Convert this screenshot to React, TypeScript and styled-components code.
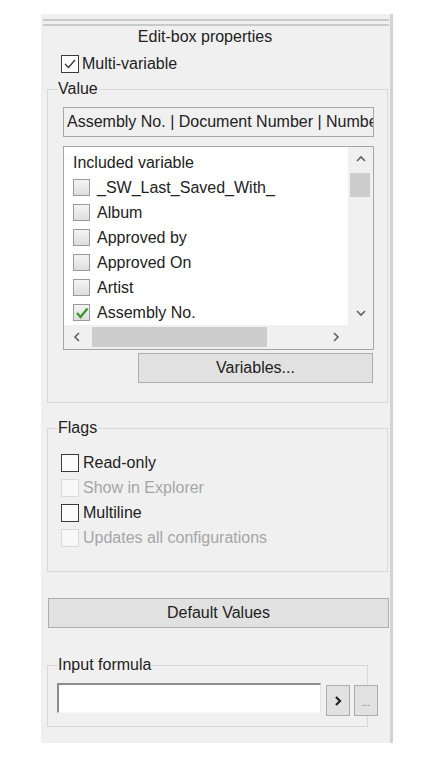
import React from "react";
import styled, { createGlobalStyle, css } from "styled-components";

type BoxKind = "dark" | "list" | "disabled";

interface Variable {
  name: string;
  checked: boolean;
}

const variables: Variable[] = [
  { name: "_SW_Last_Saved_With_", checked: false },
  { name: "Album", checked: false },
  { name: "Approved by", checked: false },
  { name: "Approved On", checked: false },
  { name: "Artist", checked: false },
  { name: "Assembly No.", checked: true },
];

const flags = [
  { label: "Read-only", disabled: false },
  { label: "Show in Explorer", disabled: true },
  { label: "Multiline", disabled: false },
  { label: "Updates all configurations", disabled: true },
];

const Chevron: React.FC<{ dir: "up" | "down" | "left" | "right"; bold?: boolean }> = ({
  dir,
  bold,
}) => {
  const pts = {
    up: "1,6 5,2 9,6",
    down: "1,2 5,6 9,2",
    left: "6,1 2,5 6,9",
    right: "2,1 6,5 2,9",
  }[dir];
  const horiz = dir === "up" || dir === "down";
  return (
    <svg
      width={horiz ? 10 : 8}
      height={horiz ? 8 : 10}
      viewBox={horiz ? "0 0 10 8" : "0 0 8 10"}
    >
      <polyline
        points={pts}
        fill="none"
        stroke={bold ? "#222" : "#606060"}
        strokeWidth={bold ? 2.2 : 1.6}
      />
    </svg>
  );
};

const CheckBox: React.FC<{ kind: BoxKind; checked?: boolean }> = ({ kind, checked }) => (
  <Box $kind={kind}>
    {checked && kind === "dark" && (
      <svg width="14" height="14" viewBox="0 0 14 14">
        <polyline points="2,7 5.5,10.5 12,3" fill="none" stroke="#333" strokeWidth="1.3" />
      </svg>
    )}
    {checked && kind === "list" && (
      <svg width="14" height="14" viewBox="0 0 14 14">
        <polyline points="2,7 5.5,11 12.5,2.5" fill="none" stroke="#2f9a26" strokeWidth="2.2" />
      </svg>
    )}
  </Box>
);

const App: React.FC = () => {
  return (
    <>
      <GlobalStyle />
      <Panel>
        <TopRule />
        <Title>Edit-box properties</Title>
        <MultiRow>
          <CheckBox kind="dark" checked />
          <span>Multi-variable</span>
        </MultiRow>

        <Group>
          <Legend>Value</Legend>
          <ValueBody>
            <ValueField>Assembly No. | Document Number | Number</ValueField>
            <List>
              <ListContent>
                <ListRow>Included variable</ListRow>
                {variables.map((v) => (
                  <ListRow key={v.name}>
                    <CheckBox kind="list" checked={v.checked} />
                    <ItemText>{v.name}</ItemText>
                  </ListRow>
                ))}
              </ListContent>
              <VScroll>
                <ArrowCell $h={24}>
                  <Chevron dir="up" />
                </ArrowCell>
                <VThumb />
                <Spacer />
                <ArrowCell $h={24}>
                  <Chevron dir="down" />
                </ArrowCell>
              </VScroll>
              <HScroll>
                <ArrowCell $w={26}>
                  <Chevron dir="left" />
                </ArrowCell>
                <HThumb />
                <Spacer />
                <ArrowCell $w={25}>
                  <Chevron dir="right" />
                </ArrowCell>
              </HScroll>
              <Corner />
            </List>
            <VariablesButton>Variables...</VariablesButton>
          </ValueBody>
        </Group>

        <Group $top={16}>
          <Legend>Flags</Legend>
          <FlagsBody>
            {flags.map((f) => (
              <FlagRow key={f.label} $disabled={f.disabled}>
                <CheckBox kind={f.disabled ? "disabled" : "dark"} />
                <span>{f.label}</span>
              </FlagRow>
            ))}
          </FlagsBody>
        </Group>

        <DefaultButton>Default Values</DefaultButton>

        <Group $top={28} $right={22}>
          <Legend>Input formula</Legend>
          <FormulaBody>
            <FormulaRow>
              <FormulaInput />
              <SmallButton>
                <Chevron dir="right" bold />
              </SmallButton>
              <SmallButton $dots>...</SmallButton>
            </FormulaRow>
          </FormulaBody>
        </Group>
      </Panel>
    </>
  );
};

export default App;

const GlobalStyle = createGlobalStyle`
  html, body {
    margin: 0;
    padding: 0;
    background: #ffffff;
  }
  body {
    font-family: "Liberation Sans", Arial, sans-serif;
    font-size: 16px;
    color: #222;
  }
`;

const Panel = styled.div`
  margin: 14px 0 0 41px;
  width: 349px;
  background: #f0f0f0;
  border-right: 3px solid #d3d3d3;
  padding: 5px 0 16px;
  line-height: 20px;
`;

const TopRule = styled.div`
  margin: 0 1px 0 2px;
  height: 3px;
  border-top: 2px solid #c9c9c9;
  border-bottom: 2px solid #c9c9c9;
`;

const Title = styled.div`
  margin: 1px 21px 0 0;
  height: 20px;
  text-align: center;
`;

const MultiRow = styled.div`
  margin: 7px 0 0 20px;
  height: 20px;
  display: flex;
  align-items: center;
  gap: 3px;
`;

const Box = styled.span<{ $kind: BoxKind }>`
  flex-shrink: 0;
  box-sizing: border-box;
  display: flex;
  align-items: center;
  justify-content: center;
  ${(p) =>
    p.$kind === "dark" &&
    css`
      width: 18px;
      height: 18px;
      border: 1px solid #3a3a3a;
      background: #fbfbfb;
    `}
  ${(p) =>
    p.$kind === "list" &&
    css`
      width: 17px;
      height: 17px;
      border: 1px solid #9a9a9a;
      background: linear-gradient(#f4f4f4, #dedede);
    `}
  ${(p) =>
    p.$kind === "disabled" &&
    css`
      width: 18px;
      height: 18px;
      border: 1px solid #dadada;
      background: #f8f8f8;
    `}
`;

const Group = styled.fieldset<{ $top?: number; $right?: number }>`
  margin: ${(p) => p.$top ?? 6}px ${(p) => p.$right ?? 2}px 0 6px;
  padding: 0;
  min-width: 0;
  border: 1px solid #d9d9d9;
`;

const Legend = styled.legend`
  margin-left: 9px;
  padding: 0 1px;
  line-height: 18px;
  height: 18px;
`;

const ValueBody = styled.div`
  padding: 9px 13px 19px 15px;
  display: flex;
  flex-direction: column;
`;

const ValueField = styled.div`
  box-sizing: border-box;
  height: 30px;
  border: 1px solid #a9a9a9;
  padding: 0 0 0 3px;
  line-height: 28px;
  white-space: nowrap;
  overflow: hidden;
  background: #f0f0f0;
`;

const List = styled.div`
  margin-top: 9px;
  box-sizing: border-box;
  height: 204px;
  border: 1px solid #a6a6a6;
  display: grid;
  grid-template-columns: 1fr 25px;
  grid-template-rows: 1fr 24px;
  background: #f0f0f0;
`;

const ListContent = styled.div`
  background: #ffffff;
  padding: 3px 0 0 9px;
  overflow: hidden;
`;

const ListRow = styled.div`
  height: 25px;
  display: flex;
  align-items: center;
  gap: 7px;
  white-space: nowrap;
`;

const ItemText = styled.span`
  line-height: 20px;
`;

const VScroll = styled.div`
  display: flex;
  flex-direction: column;
`;

const HScroll = styled.div`
  display: flex;
  align-items: stretch;
`;

const ArrowCell = styled.div<{ $w?: number; $h?: number }>`
  flex-shrink: 0;
  display: flex;
  align-items: center;
  justify-content: center;
  ${(p) => (p.$w ? `width: ${p.$w}px;` : "")}
  ${(p) => (p.$h ? `height: ${p.$h}px;` : "")}
`;

const VThumb = styled.div`
  margin: 2px 3px 0 2px;
  height: 24px;
  background: #cdcdcd;
`;

const HThumb = styled.div`
  margin: 2px 0 2px 2px;
  width: 175px;
  background: #cdcdcd;
`;

const Spacer = styled.div`
  flex: 1;
`;

const Corner = styled.div`
  background: #f0f0f0;
`;

const buttonBase = css`
  box-sizing: border-box;
  background: #e1e1e1;
  border: 1px solid #adadad;
  font-family: inherit;
  font-size: 16px;
  color: #222;
  padding: 0;
  display: flex;
  align-items: center;
  justify-content: center;
`;

const VariablesButton = styled.button`
  ${buttonBase}
  margin: 3px 1px 0 auto;
  width: 235px;
  height: 30px;
`;

const FlagsBody = styled.div`
  padding: 13px 0 21px 13px;
`;

const FlagRow = styled.div<{ $disabled?: boolean }>`
  height: 25px;
  display: flex;
  align-items: center;
  gap: 4px;
  color: ${(p) => (p.$disabled ? "#a6a6a6" : "#222")};
`;

const DefaultButton = styled.button`
  ${buttonBase}
  margin: 26px 1px 0 7px;
  width: calc(100% - 8px);
  height: 30px;
`;

const FormulaBody = styled.div`
  padding: 9px 0 13px 9px;
`;

const FormulaRow = styled.div`
  height: 30px;
  display: flex;
  align-items: flex-start;
  gap: 5px;
`;

const FormulaInput = styled.div`
  flex-shrink: 0;
  box-sizing: border-box;
  width: 264px;
  height: 30px;
  background: #ffffff;
  border-top: 2px solid #8c8c8c;
  border-left: 2px solid #8c8c8c;
  border-right: 1px solid #e4e4e4;
  border-bottom: 1px solid #f6f6f6;
`;

const SmallButton = styled.button<{ $dots?: boolean }>`
  ${buttonBase}
  flex-shrink: 0;
  margin-top: 2px;
  width: 24px;
  height: 31px;
  & + & {
    margin-left: -1px;
  }
  ${(p) =>
    p.$dots &&
    css`
      font-size: 10px;
      color: #777;
      padding-top: 4px;
    `}
`;
